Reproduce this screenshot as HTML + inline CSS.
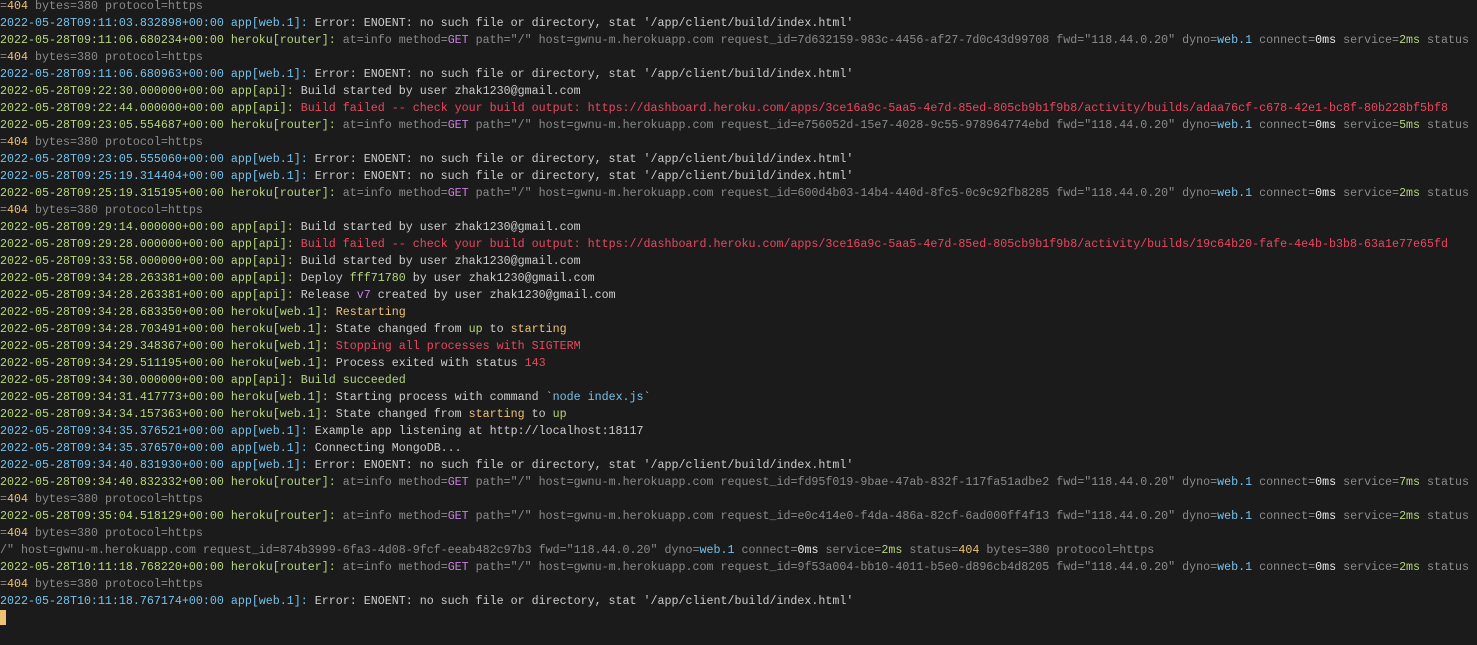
<!DOCTYPE html>
<html><head><meta charset="utf-8"><style>
html,body{margin:0;padding:0;background:#1b1b1b;width:1477px;height:645px;overflow:hidden}
#t{position:absolute;left:0;top:-2px;font-family:"Liberation Mono",monospace;font-size:11.67px;line-height:17px;color:#cccccc}
.l{height:17px;overflow:hidden;width:1477px;white-space:pre}
.b{color:#75c1ea}.g{color:#b5d57f}.d{color:#8a8a8a}.r{color:#e9475f}.y{color:#edc274}.p{color:#c680dc}.W{color:#e8e8e8}
.cur{display:inline-block;width:6px;height:15px;background:#edc274;vertical-align:-3px}
</style></head><body><div id="t">
<div class="l"><span class="d">=</span><span class="y">404</span><span class="d"> bytes=380 protocol=https</span></div>
<div class="l"><span class="b">2022-05-28T09:11:03.832898+00:00 app[web.1]:</span> Error: ENOENT: no such file or directory, stat '/app/client/build/index.html'</div>
<div class="l"><span class="g">2022-05-28T09:11:06.680234+00:00 heroku[router]:</span><span class="d"> at=info method=</span><span class="p">GET</span><span class="d"> path="/" host=gwnu-m.herokuapp.com request_id=7d632159-983c-4456-af27-7d0c43d99708 fwd="118.44.0.20" dyno=</span><span class="b">web.1</span><span class="d"> connect=</span><span class="W">0ms</span><span class="d"> service=</span><span class="g">2ms</span><span class="d"> status</span></div>
<div class="l"><span class="d">=</span><span class="y">404</span><span class="d"> bytes=380 protocol=https</span></div>
<div class="l"><span class="b">2022-05-28T09:11:06.680963+00:00 app[web.1]:</span> Error: ENOENT: no such file or directory, stat '/app/client/build/index.html'</div>
<div class="l"><span class="g">2022-05-28T09:22:30.000000+00:00 app[api]:</span> Build started by user zhak1230@gmail.com</div>
<div class="l"><span class="g">2022-05-28T09:22:44.000000+00:00 app[api]:</span> <span class="r">Build failed -- check your build output: https://dashboard.heroku.com/apps/3ce16a9c-5aa5-4e7d-85ed-805cb9b1f9b8/activity/builds/adaa76cf-c678-42e1-bc8f-80b228bf5bf8</span></div>
<div class="l"><span class="g">2022-05-28T09:23:05.554687+00:00 heroku[router]:</span><span class="d"> at=info method=</span><span class="p">GET</span><span class="d"> path="/" host=gwnu-m.herokuapp.com request_id=e756052d-15e7-4028-9c55-978964774ebd fwd="118.44.0.20" dyno=</span><span class="b">web.1</span><span class="d"> connect=</span><span class="W">0ms</span><span class="d"> service=</span><span class="g">5ms</span><span class="d"> status</span></div>
<div class="l"><span class="d">=</span><span class="y">404</span><span class="d"> bytes=380 protocol=https</span></div>
<div class="l"><span class="b">2022-05-28T09:23:05.555060+00:00 app[web.1]:</span> Error: ENOENT: no such file or directory, stat '/app/client/build/index.html'</div>
<div class="l"><span class="b">2022-05-28T09:25:19.314404+00:00 app[web.1]:</span> Error: ENOENT: no such file or directory, stat '/app/client/build/index.html'</div>
<div class="l"><span class="g">2022-05-28T09:25:19.315195+00:00 heroku[router]:</span><span class="d"> at=info method=</span><span class="p">GET</span><span class="d"> path="/" host=gwnu-m.herokuapp.com request_id=600d4b03-14b4-440d-8fc5-0c9c92fb8285 fwd="118.44.0.20" dyno=</span><span class="b">web.1</span><span class="d"> connect=</span><span class="W">0ms</span><span class="d"> service=</span><span class="g">2ms</span><span class="d"> status</span></div>
<div class="l"><span class="d">=</span><span class="y">404</span><span class="d"> bytes=380 protocol=https</span></div>
<div class="l"><span class="g">2022-05-28T09:29:14.000000+00:00 app[api]:</span> Build started by user zhak1230@gmail.com</div>
<div class="l"><span class="g">2022-05-28T09:29:28.000000+00:00 app[api]:</span> <span class="r">Build failed -- check your build output: https://dashboard.heroku.com/apps/3ce16a9c-5aa5-4e7d-85ed-805cb9b1f9b8/activity/builds/19c64b20-fafe-4e4b-b3b8-63a1e77e65fd</span></div>
<div class="l"><span class="g">2022-05-28T09:33:58.000000+00:00 app[api]:</span> Build started by user zhak1230@gmail.com</div>
<div class="l"><span class="g">2022-05-28T09:34:28.263381+00:00 app[api]:</span> Deploy <span class="g">fff71780</span> by user zhak1230@gmail.com</div>
<div class="l"><span class="g">2022-05-28T09:34:28.263381+00:00 app[api]:</span> Release <span class="p">v7</span> created by user zhak1230@gmail.com</div>
<div class="l"><span class="g">2022-05-28T09:34:28.683350+00:00 heroku[web.1]:</span> <span class="y">Restarting</span></div>
<div class="l"><span class="g">2022-05-28T09:34:28.703491+00:00 heroku[web.1]:</span> State changed from <span class="g">up</span> to <span class="y">starting</span></div>
<div class="l"><span class="g">2022-05-28T09:34:29.348367+00:00 heroku[web.1]:</span> <span class="r">Stopping all processes with SIGTERM</span></div>
<div class="l"><span class="g">2022-05-28T09:34:29.511195+00:00 heroku[web.1]:</span> Process exited with status <span class="r">143</span></div>
<div class="l"><span class="g">2022-05-28T09:34:30.000000+00:00 app[api]: Build succeeded</span></div>
<div class="l"><span class="g">2022-05-28T09:34:31.417773+00:00 heroku[web.1]:</span> Starting process with command `<span class="b">node index.js</span>`</div>
<div class="l"><span class="g">2022-05-28T09:34:34.157363+00:00 heroku[web.1]:</span> State changed from <span class="y">starting</span> to <span class="g">up</span></div>
<div class="l"><span class="b">2022-05-28T09:34:35.376521+00:00 app[web.1]:</span> Example app listening at http://localhost:18117</div>
<div class="l"><span class="b">2022-05-28T09:34:35.376570+00:00 app[web.1]:</span> Connecting MongoDB...</div>
<div class="l"><span class="b">2022-05-28T09:34:40.831930+00:00 app[web.1]:</span> Error: ENOENT: no such file or directory, stat '/app/client/build/index.html'</div>
<div class="l"><span class="g">2022-05-28T09:34:40.832332+00:00 heroku[router]:</span><span class="d"> at=info method=</span><span class="p">GET</span><span class="d"> path="/" host=gwnu-m.herokuapp.com request_id=fd95f019-9bae-47ab-832f-117fa51adbe2 fwd="118.44.0.20" dyno=</span><span class="b">web.1</span><span class="d"> connect=</span><span class="W">0ms</span><span class="d"> service=</span><span class="g">7ms</span><span class="d"> status</span></div>
<div class="l"><span class="d">=</span><span class="y">404</span><span class="d"> bytes=380 protocol=https</span></div>
<div class="l"><span class="g">2022-05-28T09:35:04.518129+00:00 heroku[router]:</span><span class="d"> at=info method=</span><span class="p">GET</span><span class="d"> path="/" host=gwnu-m.herokuapp.com request_id=e0c414e0-f4da-486a-82cf-6ad000ff4f13 fwd="118.44.0.20" dyno=</span><span class="b">web.1</span><span class="d"> connect=</span><span class="W">0ms</span><span class="d"> service=</span><span class="g">2ms</span><span class="d"> status</span></div>
<div class="l"><span class="d">=</span><span class="y">404</span><span class="d"> bytes=380 protocol=https</span></div>
<div class="l"><span class="d">/" host=gwnu-m.herokuapp.com request_id=874b3999-6fa3-4d08-9fcf-eeab482c97b3 fwd="118.44.0.20" dyno=</span><span class="b">web.1</span><span class="d"> connect=</span><span class="W">0ms</span><span class="d"> service=</span><span class="g">2ms</span><span class="d"> status=</span><span class="y">404</span><span class="d"> bytes=380 protocol=https</span></div>
<div class="l"><span class="g">2022-05-28T10:11:18.768220+00:00 heroku[router]:</span><span class="d"> at=info method=</span><span class="p">GET</span><span class="d"> path="/" host=gwnu-m.herokuapp.com request_id=9f53a004-bb10-4011-b5e0-d896cb4d8205 fwd="118.44.0.20" dyno=</span><span class="b">web.1</span><span class="d"> connect=</span><span class="W">0ms</span><span class="d"> service=</span><span class="g">2ms</span><span class="d"> status</span></div>
<div class="l"><span class="d">=</span><span class="y">404</span><span class="d"> bytes=380 protocol=https</span></div>
<div class="l"><span class="b">2022-05-28T10:11:18.767174+00:00 app[web.1]:</span> Error: ENOENT: no such file or directory, stat '/app/client/build/index.html'</div>
<div class="l"><span class="cur"></span></div>
</div></body></html>
